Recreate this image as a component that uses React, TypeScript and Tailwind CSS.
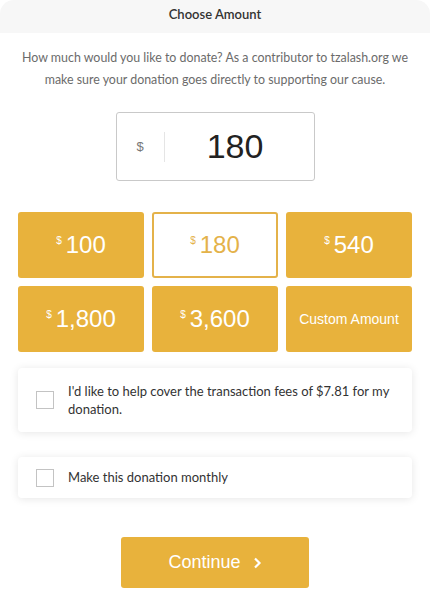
import { useState } from 'react';

const amounts = [
  { value: '100', label: '100' },
  { value: '180', label: '180' },
  { value: '540', label: '540' },
  { value: '1800', label: '1,800' },
  { value: '3600', label: '3,600' },
];

export default function App() {
  const [selected, setSelected] = useState('180');
  const [coverFees, setCoverFees] = useState(false);
  const [monthly, setMonthly] = useState(false);

  return (
    <div className="min-h-[614px] w-[430px] overflow-hidden rounded-t-[14px] bg-white font-['Lato','Open_Sans',sans-serif]">
      {/* Header */}
      <div className="h-[33px] bg-[#f7f7f7] pt-[5px] text-center text-[13px] leading-[18px] font-semibold text-[#333]">
        Choose Amount
      </div>

      {/* Intro text */}
      <p className="mx-auto mt-[14px] w-[412px] text-center text-[12.4px] leading-[22px] text-[#6b6b6b]">
        How much would you like to donate? As a contributor to tzalash.org we make sure your donation goes directly to
        supporting our cause.
      </p>

      {/* Amount input */}
      <div className="mt-[21px] flex justify-center">
        <div className="flex h-[69px] w-[199px] items-center rounded-[3px] border border-[#c9c9c9] bg-white">
          <span className="w-[47px] text-center font-['Liberation_Sans',sans-serif] text-[13px] text-[#777]">$</span>
          <div className="h-[30px] w-px bg-[#e5e5e5]" />
          <span className="flex-1 pr-[8px] text-center font-['Liberation_Sans',sans-serif] text-[34px] text-[#222]">
            {selected === 'custom' ? '' : selected}
          </span>
        </div>
      </div>

      {/* Amount grid */}
      <div className="mx-[18px] mt-[31px] grid grid-cols-3 gap-x-[8px] gap-y-[8px]">
        {amounts.map((a) => {
          const active = selected === a.value;
          return (
            <button
              key={a.value}
              onClick={() => setSelected(a.value)}
              className={`flex h-[66px] items-center justify-center rounded-[3px] font-['Liberation_Sans',sans-serif] ${
                active ? 'border-2 border-[#e4b24a] bg-white text-[#e4b24a]' : 'bg-[#e8b23c] text-white'
              }`}
            >
              <span className="mb-[10px] mr-[4px] text-[10px]">$</span>
              <span className="text-[24px]">{a.label}</span>
            </button>
          );
        })}
        <button
          onClick={() => setSelected('custom')}
          className="flex h-[66px] items-center justify-center rounded-[3px] bg-[#e8b23c] font-['Liberation_Sans',sans-serif] text-[14px] text-white"
        >
          Custom Amount
        </button>
      </div>

      {/* Options */}
      <label className="mx-[18px] mt-[16px] flex h-[64px] cursor-pointer items-center rounded-[4px] bg-white shadow-[0_1px_8px_rgba(0,0,0,0.1)]">
        <input
          type="checkbox"
          checked={coverFees}
          onChange={(e) => setCoverFees(e.target.checked)}
          className="ml-[18px] mr-[14px] h-[18px] w-[18px] shrink-0 appearance-none border border-[#c3c3c3] bg-white"
        />
        <span className="w-[335px] text-[13px] leading-[18px] text-[#333]">
          I'd like to help cover the transaction fees of $7.81 for my donation.
        </span>
      </label>

      <label className="mx-[18px] mt-[25px] flex h-[41px] cursor-pointer items-center rounded-[4px] bg-white shadow-[0_1px_8px_rgba(0,0,0,0.1)]">
        <input
          type="checkbox"
          checked={monthly}
          onChange={(e) => setMonthly(e.target.checked)}
          className="ml-[18px] mr-[14px] h-[18px] w-[18px] shrink-0 appearance-none border border-[#c3c3c3] bg-white"
        />
        <span className="text-[13px] text-[#333]">Make this donation monthly</span>
      </label>

      {/* Continue */}
      <div className="mt-[39px] flex justify-center">
        <button className="flex h-[51px] w-[188px] items-center justify-center gap-[12px] rounded-[3px] bg-[#e8b23c] font-['Liberation_Sans',sans-serif] text-[18px] text-white">
          Continue
          <svg width="9" height="12" viewBox="0 0 9 12" fill="none">
            <path d="M2 1.5 L6.5 6 L2 10.5" stroke="white" strokeWidth="2.2" />
          </svg>
        </button>
      </div>
    </div>
  );
}
